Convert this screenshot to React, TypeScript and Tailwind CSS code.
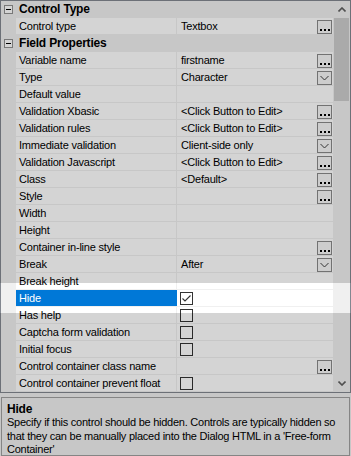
import React from "react";

type Row = {
    label: string;
    cat?: boolean;
    value?: string;
    btn?: "dots" | "drop";
    check?: boolean;
    checked?: boolean;
    selected?: boolean;
};

const rows: Row[] = [
    { label: "Control Type", cat: true },
    { label: "Control type", value: "Textbox", btn: "dots" },
    { label: "Field Properties", cat: true },
    { label: "Variable name", value: "firstname", btn: "dots" },
    { label: "Type", value: "Character", btn: "drop" },
    { label: "Default value" },
    { label: "Validation Xbasic", value: "<Click Button to Edit>", btn: "dots" },
    { label: "Validation rules", value: "<Click Button to Edit>", btn: "dots" },
    { label: "Immediate validation", value: "Client-side only", btn: "drop" },
    { label: "Validation Javascript", value: "<Click Button to Edit>", btn: "dots" },
    { label: "Class", value: "<Default>", btn: "dots" },
    { label: "Style", btn: "dots" },
    { label: "Width" },
    { label: "Height" },
    { label: "Container in-line style", btn: "dots" },
    { label: "Break", value: "After", btn: "drop" },
    { label: "Break height" },
    { label: "Hide", check: true, checked: true, selected: true },
    { label: "Has help", check: true },
    { label: "Captcha form validation", check: true },
    { label: "Initial focus", check: true },
    { label: "Control container class name", btn: "dots" },
    { label: "Control container prevent float", check: true },
];

const DotsButton = () => (
    <div className="ml-auto mr-[1px] mt-[2px] flex h-[14px] w-[15px] items-end justify-center gap-[2px] border border-[#8a8a8a] bg-[#f7f7f7] pb-[2px]">
        <span className="h-[2px] w-[2px] bg-black" />
        <span className="h-[2px] w-[2px] bg-black" />
        <span className="h-[2px] w-[2px] bg-black" />
    </div>
);

const DropButton = () => (
    <div className="ml-auto mr-[1px] mt-[2px] flex h-[14px] w-[15px] items-center justify-center border border-[#8a8a8a] bg-[#f7f7f7]">
        <svg width="9" height="6" viewBox="0 0 9 6">
            <polyline points="0.5,1 4.5,5 8.5,1" fill="none" stroke="#404040" strokeWidth="1" />
        </svg>
    </div>
);

const CheckBox = ({ checked }: { checked?: boolean }) => (
    <div className="ml-[3px] mt-[2px] h-[13px] w-[13px] border border-[#333333] bg-white">
        {checked && (
            <svg width="11" height="11" viewBox="0 0 11 11">
                <polyline points="1.5,5.5 4,8 9.5,2.5" fill="none" stroke="#333333" strokeWidth="1.1" />
            </svg>
        )}
    </div>
);

const MinusBox = () => (
    <div className="ml-[3px] flex h-[9px] w-[9px] items-center justify-center border border-[#919191] bg-white">
        <span className="h-[1px] w-[5px] bg-black" />
    </div>
);

const GridRow = ({ row }: { row: Row }) => {
    if (row.cat) {
        return (
            <div className="flex h-[17px] items-center bg-[#f0f0f0]">
                <div className="flex w-[15px] items-center">
                    <MinusBox />
                </div>
                <span className="pl-[3px] text-[12px] font-bold leading-[17px] tracking-[-0.2px]">{row.label}</span>
            </div>
        );
    }

    return (
        <div className="flex h-[17px] bg-[#f0f0f0]">
            <div className="w-[15px]" />
            <div
                className={
                    row.selected
                        ? "h-[16px] w-[161px] bg-[#0078d7] pl-[3px] leading-[16px] text-white"
                        : "mr-[1px] h-[16px] w-[160px] bg-white pl-[3px] leading-[16px]"
                }
            >
                {row.label}
            </div>
            <div className="flex h-[16px] flex-1 bg-white">
                {row.check ? (
                    <CheckBox checked={row.checked} />
                ) : (
                    <>
                        {row.value && <span className="pl-[4px] leading-[16px]">{row.value}</span>}
                        {row.btn === "dots" && <DotsButton />}
                        {row.btn === "drop" && <DropButton />}
                    </>
                )}
            </div>
        </div>
    );
};

const ScrollBar = () => (
    <div className="flex w-[17px] flex-col bg-[#f0f0f0]">
        <div className="flex h-[17px] items-center justify-center">
            <svg width="8" height="5" viewBox="0 0 8 5">
                <polyline points="0.5,4.5 4,1 7.5,4.5" fill="none" stroke="#606060" strokeWidth="1.6" />
            </svg>
        </div>
        <div className="mx-[1px] h-[83px] bg-[#cdcdcd]" />
        <div className="flex-1" />
        <div className="flex h-[17px] items-center justify-center">
            <svg width="8" height="5" viewBox="0 0 8 5">
                <polyline points="0.5,0.5 4,4 7.5,0.5" fill="none" stroke="#606060" strokeWidth="1.6" />
            </svg>
        </div>
    </div>
);

export default function App() {
    return (
        <div className="relative h-[456px] w-[351px] overflow-hidden bg-[#f0f0f0] font-['Liberation_Sans',Arial,sans-serif] text-[11px] tracking-[-0.2px] text-black">
            <div className="flex flex-col">
                <div className="flex border border-[#828790]">
                    <div className="flex flex-1 flex-col">
                        {rows.map((row) => (
                            <GridRow key={row.label} row={row} />
                        ))}
                    </div>
                    <ScrollBar />
                </div>

                <div className="mx-[1px] mt-[4px] h-[59px] overflow-hidden border border-[#a0a0a0] bg-[#f0f0f0] px-[5px] pt-[4px]">
                    <div className="text-[12px] font-bold leading-[14px]">Hide</div>
                    <div className="whitespace-nowrap leading-[13.5px] tracking-[-0.25px]">
                        <div>Specify if this control should be hidden. Controls are typically hidden so</div>
                        <div>that they can be manually placed into the Dialog HTML in a 'Free-form</div>
                        <div>Container'</div>
                    </div>
                </div>
            </div>

            {/* spotlight dimming around the selected row */}
            <div className="absolute left-0 right-0 top-0 h-[283px] bg-[rgba(0,0,0,0.17)]" />
            <div className="absolute bottom-0 left-0 right-0 top-[313px] bg-[rgba(0,0,0,0.17)]" />
        </div>
    );
}
